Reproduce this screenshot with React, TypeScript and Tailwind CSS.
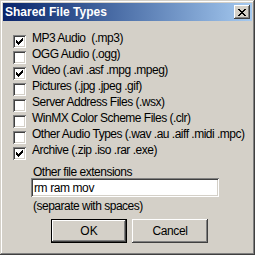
import React, { useState } from 'react';

const raised =
  'shadow-[inset_-1px_-1px_#404040,inset_1px_1px_#ffffff,inset_-2px_-2px_#808080,inset_2px_2px_#d4d0c8]';
const sunken =
  'shadow-[inset_1px_1px_#808080,inset_-1px_-1px_#ffffff,inset_2px_2px_#404040,inset_-2px_-2px_#d4d0c8]';

const fileTypes = [
  { label: 'MP3 Audio  (.mp3)', checked: true },
  { label: 'OGG Audio (.ogg)', checked: false },
  { label: 'Video (.avi .asf .mpg .mpeg)', checked: true },
  { label: 'Pictures (.jpg .jpeg .gif)', checked: false },
  { label: 'Server Address Files (.wsx)', checked: false },
  { label: 'WinMX Color Scheme Files (.clr)', checked: false },
  { label: 'Other Audio Types (.wav .au .aiff .midi .mpc)', checked: false },
  { label: 'Archive (.zip .iso .rar .exe)', checked: true },
];

function CheckMark() {
  return (
    <svg width="9" height="9" viewBox="0 0 9 9" shapeRendering="crispEdges">
      <path
        fill="#000"
        d="M7 1h1v1H7zM6 2h2v1H6zM1 3h1v1H1zM5 3h3v1H5zM1 4h2v1H1zM4 4h3v1H4zM1 5h5v1H1zM2 6h3v1H2zM3 7h1v1H3z"
      />
    </svg>
  );
}

function CloseGlyph() {
  return (
    <svg width="8" height="7" viewBox="0 0 8 7" shapeRendering="crispEdges">
      <path
        fill="#000"
        d="M0 0h2v1H0zM6 0h2v1H6zM1 1h2v1H1zM5 1h2v1H5zM2 2h4v1H2zM3 3h2v1H3zM2 4h4v1H2zM1 5h2v1H1zM5 5h2v1H5zM0 6h2v1H0zM6 6h2v1H6z"
      />
    </svg>
  );
}

function CheckRow({ label, checked, onToggle }: { label: string; checked: boolean; onToggle: () => void }) {
  return (
    <div className="flex h-4 items-start gap-[6px]" onClick={onToggle}>
      <div className={`mt-[3px] flex h-[13px] w-[13px] items-center justify-center bg-white ${sunken}`}>
        {checked && <CheckMark />}
      </div>
      <span className="whitespace-pre text-[12px] leading-[12px] tracking-[-0.5px] text-black">{label}</span>
    </div>
  );
}

export default function App() {
  const [types, setTypes] = useState(fileTypes);
  const [ext, setExt] = useState('rm ram mov');

  const toggle = (i: number) => {
    setTypes(types.map((t, j) => (j === i ? { ...t, checked: !t.checked } : t)));
  };

  return (
    <div
      className="flex h-[255px] w-[255px] flex-col bg-[#d4d0c8] p-[3px] shadow-[inset_-1px_-1px_#404040,inset_1px_1px_#d4d0c8,inset_-2px_-2px_#808080,inset_2px_2px_#ffffff]"
      style={{ fontFamily: '"Liberation Sans", Arial, sans-serif' }}
    >
      <div className="flex h-[18px] items-center justify-between bg-linear-to-r from-[#0a246a] to-[#a6caf0] pl-[2px] pr-[2px]">
        <span className="text-[12px] font-bold leading-[12px] text-white">Shared File Types</span>
        <button className={`flex h-[14px] w-[16px] items-center justify-center bg-[#d4d0c8] ${raised}`}>
          <CloseGlyph />
        </button>
      </div>

      <div className="flex flex-col pl-[10px] pt-[11px]">
        {types.map((t, i) => (
          <CheckRow key={t.label} label={t.label} checked={t.checked} onToggle={() => toggle(i)} />
        ))}
      </div>

      <div className="ml-[28px] mt-[6px] flex flex-col">
        <span className="pl-[2px] text-[12px] leading-[12px] tracking-[-0.5px] text-black">Other file extensions</span>
        <div className={`flex h-[19px] w-[188px] items-center bg-white pl-[3px] pt-[1px] ${sunken}`}>
          <input
            value={ext}
            onChange={(e) => setExt(e.target.value)}
            className="w-full bg-transparent text-[12px] leading-[12px] tracking-[-0.4px] text-black outline-none"
          />
        </div>
        <span className="mt-[3px] pl-[2px] text-[12px] leading-[12px] tracking-[-0.5px] text-black">
          (separate with spaces)
        </span>
      </div>

      <div className="ml-[48px] mt-[7px] flex gap-[5px]">
        <div className="h-[24px] w-[76px] bg-black p-px">
          <button className={`flex h-full w-full items-center justify-center bg-[#d4d0c8] text-[12px] text-black ${raised}`}>
            OK
          </button>
        </div>
        <button className={`flex h-[24px] w-[76px] items-center justify-center bg-[#d4d0c8] text-[12px] tracking-[-0.4px] text-black ${raised}`}>
          Cancel
        </button>
      </div>
    </div>
  );
}
